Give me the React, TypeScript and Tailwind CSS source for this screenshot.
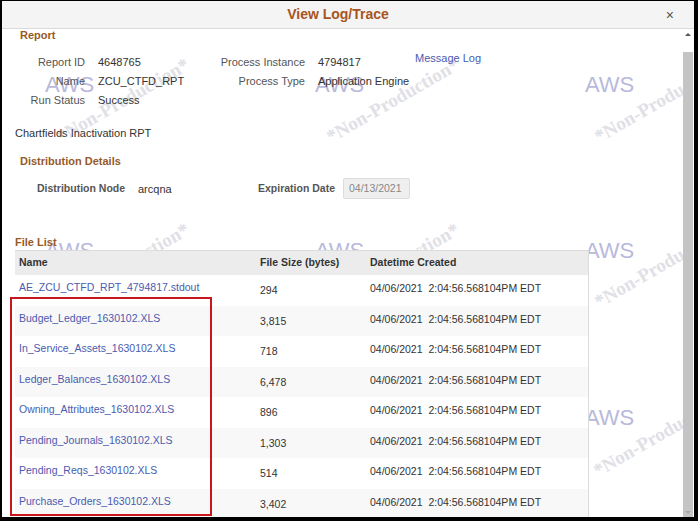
import React from "react";

const files = [
  { name: "AE_ZCU_CTFD_RPT_4794817.stdout", size: "294" },
  { name: "Budget_Ledger_1630102.XLS", size: "3,815" },
  { name: "In_Service_Assets_1630102.XLS", size: "718" },
  { name: "Ledger_Balances_1630102.XLS", size: "6,478" },
  { name: "Owning_Attributes_1630102.XLS", size: "896" },
  { name: "Pending_Journals_1630102.XLS", size: "1,303" },
  { name: "Pending_Reqs_1630102.XLS", size: "514" },
  { name: "Purchase_Orders_1630102.XLS", size: "3,402" },
];

const awsSpots = [
  "left-[43px] top-[45px]",
  "left-[313px] top-[45px]",
  "left-[583px] top-[45px]",
  "left-[43px] top-[211px]",
  "left-[313px] top-[211px]",
  "left-[583px] top-[211px]",
  "left-[43px] top-[378px]",
  "left-[313px] top-[378px]",
  "left-[583px] top-[378px]",
];

const stampSpots = [
  "left-[56px] top-[99px]",
  "left-[326px] top-[99px]",
  "left-[594px] top-[99px]",
  "left-[56px] top-[264px]",
  "left-[326px] top-[264px]",
  "left-[594px] top-[264px]",
  "left-[56px] top-[433px]",
  "left-[326px] top-[433px]",
  "left-[593px] top-[433px]",
];

const Watermarks = () => (
  <div className="absolute inset-0 z-0 pointer-events-none">
    {awsSpots.map((c, i) => (
      <span key={"a" + i} className={`absolute ${c} text-[22px] leading-none text-[#b9b9db]`}>
        AWS
      </span>
    ))}
    {stampSpots.map((c, i) => (
      <span
        key={"s" + i}
        className={`absolute ${c} origin-left -rotate-[30deg] whitespace-nowrap font-['Liberation_Serif',serif] font-bold text-[19px] leading-none text-[#e0e0e6]`}
      >
        *Non-Production*
      </span>
    ))}
  </div>
);

const InfoRow = ({ l1, v1, l2, v2, extra }: { l1: string; v1: string; l2?: string; v2?: string; extra?: React.ReactNode }) => (
  <div className="flex items-center h-[19px]">
    <span className="w-[83px] text-right text-[#555]">{l1}</span>
    <span className="ml-[13px] w-[102px] text-[#333]">{v1}</span>
    <span className="w-[105px] text-right text-[#555]">{l2}</span>
    <span className="ml-[13px] w-[97px] text-[#333]">{v2}</span>
    {extra}
  </div>
);

export default function App() {
  return (
    <div className="w-[698px] h-[521px] overflow-hidden bg-white border-l-2 border-t border-r-4 border-b-4 border-black flex flex-col font-['Liberation_Sans',Arial,sans-serif] text-[11px]">
      {/* title bar */}
      <div className="relative h-[28px] shrink-0 bg-[#f4f4f4] border-b border-[#dadada] flex items-center justify-center pr-[20px]">
        <span className="text-[14px] font-bold text-[#a8541d]">View Log/Trace</span>
        <span className="absolute right-[20px] top-[4px] text-[14px] text-[#555]">×</span>
      </div>

      <div className="flex flex-1 min-h-0">
        <div className="relative flex-1 overflow-hidden">
          <Watermarks />

          <div className="relative z-10 flex flex-col">
            <div className="ml-[18px] h-[13px] leading-[13px] font-bold text-[#985a28]">Report</div>

            <div className="mt-[11px] flex flex-col">
              <InfoRow
                l1="Report ID"
                v1="4648765"
                l2="Process Instance"
                v2="4794817"
                extra={<span className="-translate-y-[4px] text-[#4a5bb0]">Message Log</span>}
              />
              <InfoRow l1="Name" v1="ZCU_CTFD_RPT" l2="Process Type" v2="Application Engine" />
              <InfoRow l1="Run Status" v1="Success" />
            </div>

            <div className="mt-[17px] ml-[13px] h-[13px] leading-[13px] text-[#333]">Chartfields Inactivation RPT</div>

            <div className="mt-[15px] ml-[18px] h-[13px] leading-[13px] font-bold text-[#985a28]">Distribution Details</div>

            <div className="mt-[10px] flex items-center h-[21px]">
              <span className="ml-[35px] w-[88px] text-[10.5px] font-bold text-[#555] whitespace-nowrap">Distribution Node</span>
              <span className="ml-[13px] w-[120px] text-[#333] translate-y-[1px]">arcqna</span>
              <span className="w-[77px] text-[10.5px] font-bold text-[#555] whitespace-nowrap">Expiration Date</span>
              <div className="ml-[8px] w-[67px] h-[21px] flex items-center pl-[5px] bg-[#efefef] border border-[#dcdcdc] rounded-[2px] text-[10.5px] text-[#888]">
                04/13/2021
              </div>
            </div>

            <div className="mt-[37px] ml-[13px] h-[13px] leading-[13px] font-bold text-[#985a28]">File List</div>

            <div className="mt-[1px] ml-[13px] w-[574px] border-t border-r border-[#dcdcdc] bg-white text-[10.5px]">
              <div className="grid grid-cols-[245px_110px_1fr] items-center h-[24px] bg-[#ececec] font-bold text-[#333]">
                <span className="pl-[4px]">Name</span>
                <span>File Size (bytes)</span>
                <span>Datetime Created</span>
              </div>
              {files.map((f, i) => (
                <div
                  key={f.name}
                  className={`grid grid-cols-[245px_110px_1fr] items-center h-[30.5px] text-[#333] ${i % 2 === 1 ? "bg-[#f8f8f8]" : "bg-white"}`}
                >
                  <span className="pl-[4px] -translate-y-[2px] text-[#4a5bb0] whitespace-nowrap">{f.name}</span>
                  <span className="translate-y-[1px]">{f.size}</span>
                  <span className="whitespace-pre translate-y-[-1px]">{"04/06/2021  2:04:56.568104PM EDT"}</span>
                </div>
              ))}
            </div>
          </div>

          {/* highlight box */}
          <div className="absolute z-20 left-[8px] top-[268px] w-[202px] h-[219px] border-2 border-[#c8161d]" />
        </div>

        {/* scrollbar */}
        <div className="w-[10px] flex flex-col shrink-0">
          <div className="h-[23px] bg-white flex justify-center pt-[4px]">
            <div className="w-0 h-0 border-l-[3px] border-r-[3px] border-b-[3px] border-l-transparent border-r-transparent border-b-[#555]" />
          </div>
          <div className="flex-1 bg-[#c4c4c4] flex items-end justify-center pb-[3px]">
            <div className="w-0 h-0 border-l-[3px] border-r-[3px] border-t-[3px] border-l-transparent border-r-transparent border-t-[#aaa]" />
          </div>
        </div>
        <div className="w-[1px] bg-white" />
      </div>
    </div>
  );
}
